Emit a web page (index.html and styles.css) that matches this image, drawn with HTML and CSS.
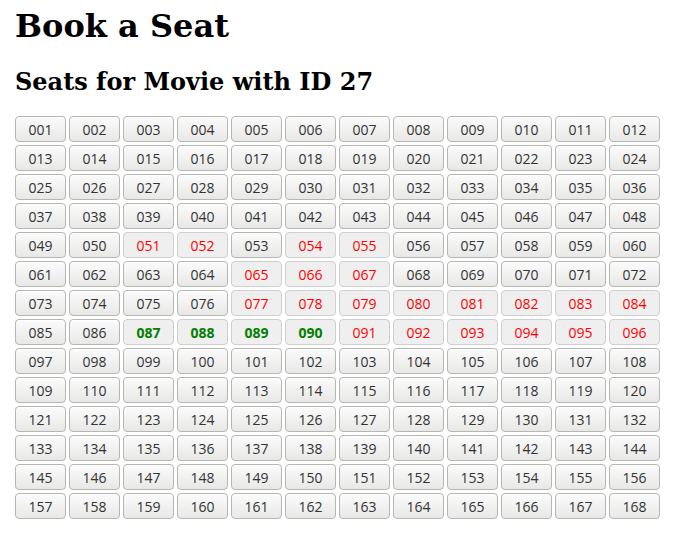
FILE: index.html
```html
<!DOCTYPE html>
<html lang="en">
<head>
    <meta charset="UTF-8">
    <title>Book a Seat</title>
    <link rel="stylesheet" href="styles.css">
</head>
<body>
    <h1>Book a Seat</h1>
    <h2>Seats for Movie with ID 27</h2>

    <div class="seat-grid">
        <button class="seat">001</button><button class="seat">002</button><button class="seat">003</button><button class="seat">004</button><button class="seat">005</button><button class="seat">006</button><button class="seat">007</button><button class="seat">008</button><button class="seat">009</button><button class="seat">010</button><button class="seat">011</button><button class="seat">012</button>
        <button class="seat">013</button><button class="seat">014</button><button class="seat">015</button><button class="seat">016</button><button class="seat">017</button><button class="seat">018</button><button class="seat">019</button><button class="seat">020</button><button class="seat">021</button><button class="seat">022</button><button class="seat">023</button><button class="seat">024</button>
        <button class="seat">025</button><button class="seat">026</button><button class="seat">027</button><button class="seat">028</button><button class="seat">029</button><button class="seat">030</button><button class="seat">031</button><button class="seat">032</button><button class="seat">033</button><button class="seat">034</button><button class="seat">035</button><button class="seat">036</button>
        <button class="seat">037</button><button class="seat">038</button><button class="seat">039</button><button class="seat">040</button><button class="seat">041</button><button class="seat">042</button><button class="seat">043</button><button class="seat">044</button><button class="seat">045</button><button class="seat">046</button><button class="seat">047</button><button class="seat">048</button>
        <button class="seat">049</button><button class="seat">050</button><button class="seat taken">051</button><button class="seat taken">052</button><button class="seat">053</button><button class="seat taken">054</button><button class="seat taken">055</button><button class="seat">056</button><button class="seat">057</button><button class="seat">058</button><button class="seat">059</button><button class="seat">060</button>
        <button class="seat">061</button><button class="seat">062</button><button class="seat">063</button><button class="seat">064</button><button class="seat taken">065</button><button class="seat taken">066</button><button class="seat taken">067</button><button class="seat">068</button><button class="seat">069</button><button class="seat">070</button><button class="seat">071</button><button class="seat">072</button>
        <button class="seat">073</button><button class="seat">074</button><button class="seat">075</button><button class="seat">076</button><button class="seat taken">077</button><button class="seat taken">078</button><button class="seat taken">079</button><button class="seat taken">080</button><button class="seat taken">081</button><button class="seat taken">082</button><button class="seat taken">083</button><button class="seat taken">084</button>
        <button class="seat">085</button><button class="seat">086</button><button class="seat selected">087</button><button class="seat selected">088</button><button class="seat selected">089</button><button class="seat selected">090</button><button class="seat taken">091</button><button class="seat taken">092</button><button class="seat taken">093</button><button class="seat taken">094</button><button class="seat taken">095</button><button class="seat taken">096</button>
        <button class="seat">097</button><button class="seat">098</button><button class="seat">099</button><button class="seat">100</button><button class="seat">101</button><button class="seat">102</button><button class="seat">103</button><button class="seat">104</button><button class="seat">105</button><button class="seat">106</button><button class="seat">107</button><button class="seat">108</button>
        <button class="seat">109</button><button class="seat">110</button><button class="seat">111</button><button class="seat">112</button><button class="seat">113</button><button class="seat">114</button><button class="seat">115</button><button class="seat">116</button><button class="seat">117</button><button class="seat">118</button><button class="seat">119</button><button class="seat">120</button>
        <button class="seat">121</button><button class="seat">122</button><button class="seat">123</button><button class="seat">124</button><button class="seat">125</button><button class="seat">126</button><button class="seat">127</button><button class="seat">128</button><button class="seat">129</button><button class="seat">130</button><button class="seat">131</button><button class="seat">132</button>
        <button class="seat">133</button><button class="seat">134</button><button class="seat">135</button><button class="seat">136</button><button class="seat">137</button><button class="seat">138</button><button class="seat">139</button><button class="seat">140</button><button class="seat">141</button><button class="seat">142</button><button class="seat">143</button><button class="seat">144</button>
        <button class="seat">145</button><button class="seat">146</button><button class="seat">147</button><button class="seat">148</button><button class="seat">149</button><button class="seat">150</button><button class="seat">151</button><button class="seat">152</button><button class="seat">153</button><button class="seat">154</button><button class="seat">155</button><button class="seat">156</button>
        <button class="seat">157</button><button class="seat">158</button><button class="seat">159</button><button class="seat">160</button><button class="seat">161</button><button class="seat">162</button><button class="seat">163</button><button class="seat">164</button><button class="seat">165</button><button class="seat">166</button><button class="seat">167</button><button class="seat">168</button>
    </div>
</body>
</html>
```

FILE: styles.css
```css
body {
    margin: 0;
    padding: 0 15px;
    font-family: "DejaVu Serif", serif;
    background: #fff;
    color: #000;
}

h1 {
    font-size: 32px;
    margin: 7px 0 0;
    line-height: 38px;
}

h2 {
    font-size: 24px;
    margin: 23px 0 0;
    line-height: 28px;
}

.seat-grid {
    display: grid;
    grid-template-columns: repeat(12, 51px);
    grid-auto-rows: 26px;
    gap: 3px;
    margin-top: 20px;
}

.seat {
    margin: 0;
    padding: 0;
    font-family: "Open Sans", sans-serif;
    font-size: 14px;
    color: #333;
    border: 1px solid #b6b6b3;
    border-radius: 4px;
    background: linear-gradient(#fbfbfb, #e8e8e7);
    box-shadow: inset 0 1px 0 #fff;
    cursor: pointer;
}

.seat.taken {
    color: #f00;
    background: #efefef;
    border-color: #cfcfcd;
    box-shadow: none;
}

.seat.selected {
    color: #008000;
    font-weight: bold;
    background: #efefef;
    border-color: #cfcfcd;
    box-shadow: none;
}
```
